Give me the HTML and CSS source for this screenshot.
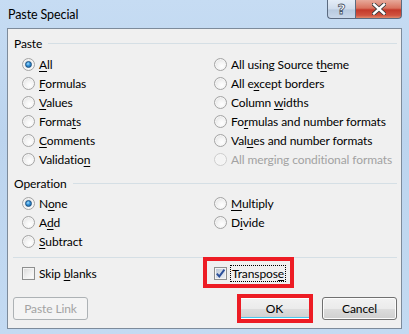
FILE: index.html
```html
<!DOCTYPE html>
<html>
<head>
<meta charset="utf-8">
<link rel="stylesheet" href="styles.css">
</head>
<body>
<div class="window">
  <div class="titlebar">
    <span class="title">Paste Special</span>
    <div class="caption-btns">
      <div class="cap-btn help">?</div>
      <div class="cap-btn close">
        <svg width="14" height="12" viewBox="0 0 14 12"><path d="M2 1.5 L12 10.5 M12 1.5 L2 10.5" stroke="#3b3b3b" stroke-width="4.2" stroke-linecap="square"/><path d="M2 1.5 L12 10.5 M12 1.5 L2 10.5" stroke="#fff" stroke-width="2.4" stroke-linecap="square"/></svg>
      </div>
    </div>
  </div>
  <div class="client">
    <div class="group"><span class="group-label">Paste</span><span class="rule"></span></div>
    <div class="opts paste-opts">
      <div class="item"><span class="radio on"></span><span><u>A</u>ll</span></div>
      <div class="item"><span class="radio"></span><span><u>F</u>ormulas</span></div>
      <div class="item"><span class="radio"></span><span><u>V</u>alues</span></div>
      <div class="item"><span class="radio"></span><span>Forma<u>t</u>s</span></div>
      <div class="item"><span class="radio"></span><span><u>C</u>omments</span></div>
      <div class="item"><span class="radio"></span><span>Validatio<u>n</u></span></div>
      <div class="item"><span class="radio"></span><span>All using Source t<u>h</u>eme</span></div>
      <div class="item"><span class="radio"></span><span>All e<u>x</u>cept borders</span></div>
      <div class="item"><span class="radio"></span><span>Column <u>w</u>idths</span></div>
      <div class="item"><span class="radio"></span><span>Fo<u>r</u>mulas and number formats</span></div>
      <div class="item"><span class="radio"></span><span>Val<u>u</u>es and number formats</span></div>
      <div class="item disabled"><span class="radio"></span><span>All merging conditional formats</span></div>
    </div>
    <div class="group op-group"><span class="group-label">Operation</span><span class="rule"></span></div>
    <div class="opts op-opts">
      <div class="item"><span class="radio on"></span><span>N<u>o</u>ne</span></div>
      <div class="item"><span class="radio"></span><span>A<u>d</u>d</span></div>
      <div class="item"><span class="radio"></span><span><u>S</u>ubtract</span></div>
      <div class="item"><span class="radio"></span><span><u>M</u>ultiply</span></div>
      <div class="item"><span class="radio"></span><span>D<u>i</u>vide</span></div>
    </div>
    <div class="sep"></div>
    <div class="checks">
      <div class="item"><span class="check"></span><span>Skip <u>b</u>lanks</span></div>
      <div class="item marked"><span class="check on"><svg width="11" height="11" viewBox="0 0 11 11"><path d="M1.8 5.6 L4.3 8.4 L9.4 1.6" fill="none" stroke="#2b4f9a" stroke-width="1.9"/></svg></span><span class="focus">Transpos<u>e</u></span></div>
    </div>
    <div class="buttons">
      <div class="btn disabled">Paste Link</div>
      <div class="spacer"></div>
      <div class="btn default marked-btn">OK</div>
      <div class="btn">Cancel</div>
    </div>
  </div>
</div>
</body>
</html>
```

FILE: styles.css
```css
html, body {
  margin: 0;
  padding: 0;
}
body {
  font-family: Lato, "Noto Sans", sans-serif;
  font-size: 12px;
  letter-spacing: -0.1px;
  color: #000;
  background: #fff;
}
.window {
  width: 409px;
  height: 334px;
  box-sizing: border-box;
  background: linear-gradient(180deg, #c6dcf3 0%, #bcd4ee 40%, #c3daf2 100%);
  padding: 0 7px 5px 7px;
  display: flex;
  flex-direction: column;
}
.titlebar {
  height: 28px;
  display: flex;
  align-items: flex-start;
  flex: none;
}
.title {
  margin-left: 1px;
  line-height: 29px;
  font-size: 12.5px;
  color: #000;
}
.caption-btns {
  margin-left: auto;
  display: flex;
  height: 19px;
}
.cap-btn {
  height: 19px;
  box-sizing: border-box;
  border: 1px solid #5b6b80;
  border-top: none;
  display: flex;
  align-items: center;
  justify-content: center;
}
.help {
  width: 28px;
  border-radius: 0 0 0 4px;
  border-right: none;
  background: linear-gradient(180deg, #e4edf7 0%, #cfdcec 50%, #b8cadf 55%, #c9d8ea 100%);
  color: #fff;
  font-weight: bold;
  font-size: 14px;
  -webkit-text-stroke: 0.8px #4a5566;
  font-family: "DejaVu Sans", sans-serif;
}
.close {
  width: 47px;
  border-radius: 0 0 4px 0;
  background: linear-gradient(180deg, #e7a99a 0%, #d9735f 45%, #c3392a 55%, #d0523f 85%, #e08a6c 100%);
}
.client {
  flex: 1;
  background: #f0f0f0;
  border: 1px solid #7d8b9b;
  display: flex;
  flex-direction: column;
  padding: 6px 4px 0 0;
}
.group {
  display: flex;
  align-items: center;
  height: 16px;
  padding-left: 6px;
}
.group-label {
  padding-right: 6px;
}
.rule {
  flex: 1;
  height: 1px;
  background: #d5dfe5;
}
.op-group {
  margin-top: 6px;
}
.opts {
  display: grid;
  grid-auto-flow: column;
  grid-template-columns: 192px 1fr;
  padding-left: 14px;
  margin-top: 4px;
}
.paste-opts {
  grid-template-rows: repeat(6, 19px);
}
.op-opts {
  grid-template-rows: repeat(3, 19px);
  margin-top: 3px;
}
.item {
  display: flex;
  align-items: center;
  gap: 4px;
  height: 19px;
  white-space: nowrap;
}
.item u {
  text-underline-offset: 2px;
}
.radio {
  width: 13px;
  height: 13px;
  box-sizing: border-box;
  border-radius: 50%;
  border: 1px solid #a4a4a4;
  background: radial-gradient(circle at 62% 66%, #ffffff 0%, #f4f4f4 40%, #d9d9d9 100%);
  box-shadow: inset 0 0 0 1px #f6f6f6;
  display: grid;
  place-items: center;
  flex: none;
}
.radio.on::after {
  content: "";
  width: 7px;
  height: 7px;
  box-sizing: border-box;
  border-radius: 50%;
  border: 1px solid #1a4f80;
  background: radial-gradient(circle at 40% 35%, #a6e0ff 0%, #3a97dc 40%, #0f5694 100%);
}
.disabled {
  color: #a2a2a2;
}
.item.disabled .radio {
  border-color: #cdcdcd;
  background: #f4f4f4;
}
.sep {
  height: 1px;
  background: #d5dfe5;
  margin: 6px 0 0 5px;
}
.checks {
  display: grid;
  grid-template-columns: 192px 1fr;
  padding-left: 14px;
  margin-top: 6px;
}
.check {
  width: 13px;
  height: 13px;
  box-sizing: border-box;
  border: 1px solid #8e8f8f;
  background: linear-gradient(135deg, #d8d8d8 0%, #eeeeee 50%, #ffffff 100%);
  box-shadow: inset 0 0 0 1px #f4f4f4;
  flex: none;
  display: grid;
  place-items: center;
}
.check.on {
  background: linear-gradient(135deg, #b9c4d3 0%, #d6dde6 50%, #eef1f5 100%);
}
.check svg {
  display: block;
}
.focus {
  outline: 1px dotted #000;
  padding: 0 1px;
  line-height: 15px;
}
.marked {
  position: relative;
}
.marked::after {
  content: "";
  position: absolute;
  left: -11px;
  top: -7px;
  width: 91px;
  height: 31px;
  box-sizing: border-box;
  border: 4px solid #ed1c24;
}
.buttons {
  display: flex;
  margin-top: 14px;
  padding-left: 5px;
  gap: 10px;
}
.spacer {
  flex: 1;
}
.btn {
  width: 75px;
  height: 23px;
  box-sizing: border-box;
  border: 1px solid #707070;
  border-radius: 3px;
  background: linear-gradient(180deg, #f2f2f2 0%, #ebebeb 50%, #dddddd 51%, #cfcfcf 100%);
  box-shadow: inset 0 0 0 1px #fcfcfc;
  display: flex;
  align-items: center;
  justify-content: center;
}
.btn.disabled {
  border-color: #adb2b5;
  background: #f4f4f4;
  box-shadow: none;
  color: #a3a3a3;
}
.btn.default {
  border-color: #3c7fb1;
  box-shadow: inset 0 0 0 1px #fff, inset 0 -2px 0 #48c8f0;
}
.marked-btn {
  position: relative;
}
.marked-btn::after {
  content: "";
  position: absolute;
  left: -1px;
  top: -4px;
  width: 76px;
  height: 29px;
  box-sizing: border-box;
  border: 4px solid #ed1c24;
}
```
